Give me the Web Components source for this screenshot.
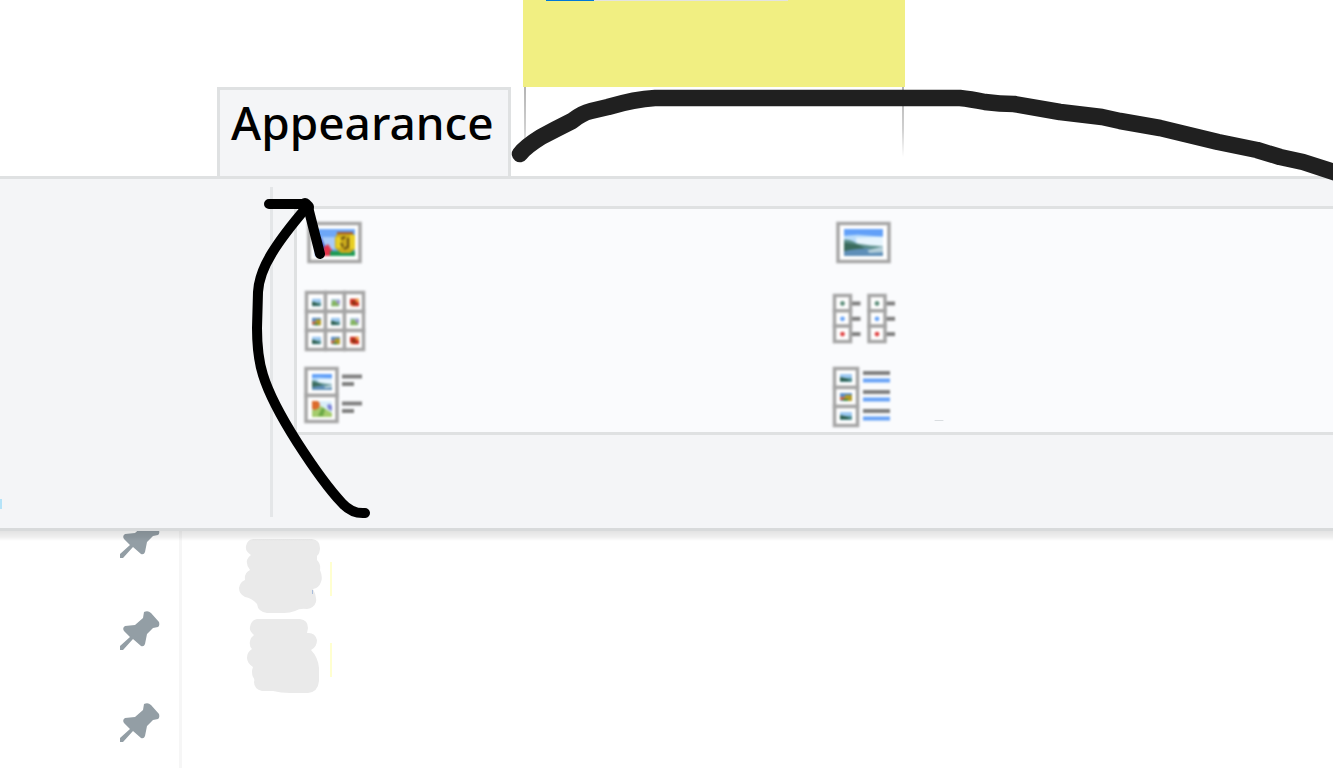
<!DOCTYPE html>
<html lang="en">
<head>
<meta charset="utf-8">
<meta name="viewport" content="width=device-width, initial-scale=1">
<title>Appearance</title>
<style>
  html, body { margin: 0; height: 100%; overflow: hidden; background: #fff; }
  body { font-family: "Noto Sans", sans-serif; color: #000; }
</style>
</head>
<body>
<explorer-window>
  <tab-strip slot="tabs"><ribbon-tab>Appearance</ribbon-tab><sticky-note></sticky-note></tab-strip>
  <ribbon-panel slot="ribbon">
    <layout-gallery>
      <layout-option kind="extra-large"></layout-option>
      <layout-option kind="large"></layout-option>
      <layout-option kind="medium"></layout-option>
      <layout-option kind="list"></layout-option>
      <layout-option kind="tiles"></layout-option>
      <layout-option kind="content"></layout-option>
    </layout-gallery>
  </ribbon-panel>
  <pin-rail slot="rail"><pin-button></pin-button><pin-button></pin-button><pin-button></pin-button></pin-rail>
  <file-pane slot="files"></file-pane>
  <ink-layer slot="ink"></ink-layer>
</explorer-window>

<script>
const define = (name, html, setup) => {
  const template = document.createElement('template');
  template.innerHTML = html;
  customElements.define(name, class extends HTMLElement {
    constructor() {
      super();
      this.attachShadow({ mode: 'open' }).append(template.content.cloneNode(true));
    }
    connectedCallback() { if (setup) setup(this); }
  });
};

define('explorer-window', `
<style>
  :host { display: flex; flex-direction: column; height: 100vh; position: relative; overflow: hidden; }
  .body { flex: 1; display: flex; min-height: 0; overflow: hidden; }
</style>
<slot name="tabs"></slot>
<slot name="ribbon"></slot>
<main class="body"><slot name="rail"></slot><slot name="files"></slot></main>
<slot name="ink"></slot>`);

define('tab-strip', `
<style>
  :host { display: flex; align-items: flex-end; gap: 12px; height: 176px; padding-left: 217px; }
</style>
<slot></slot>`);

define('ribbon-tab', `
<style>
  :host { display: block; }
  button { display: block; height: 89px; padding: 0 14px 22px 11px; margin: 0; box-sizing: border-box;
    border: 3px solid #dfe1e2; border-bottom: 0; background: #f4f5f7; color: #000;
    font: 500 46px/64px "Noto Sans", sans-serif; }
</style>
<button type="button"><slot></slot></button>`);

define('sticky-note', `
<style>
  :host { display: block; width: 382px; height: 176px; }
  .paper { height: 87px; background: #f1ef82; }
  .bar { width: 242px; height: 1px; margin-left: 23px; display: flex; background: #e3e3e0; }
  .bar i { width: 48px; background: #0078d7; }
  .legs { display: flex; justify-content: space-between; padding: 0 1px; }
  .legs i { width: 2px; height: 70px; background: linear-gradient(#b4b4b4, #d0d0d0 60%, #fff); }
</style>
<div class="paper"><div class="bar"><i></i></div></div>
<div class="legs"><i></i><i></i></div>`);

define('ribbon-panel', `
<style>
  :host { display: flex; height: 349px; border-top: 3px solid #dfe1e2; border-bottom: 3px solid #d8dadb;
    background: #f4f5f7; position: relative; z-index: 1; }
  :host::after { content: ""; position: absolute; left: 0; right: 0; top: calc(100% + 3px); height: 10px;
    background: linear-gradient(#0000001c, #00000010 60%, #00000000); }
  .group { width: 270px; box-sizing: border-box; padding-top: 320px; }
  .group i { display: block; width: 2px; height: 10px; background: #b5e3f8; }
  .rule { width: 3px; height: 330px; margin-top: 8px; background: #e4e6e8; }
  .views { flex: 1; min-width: 0; padding: 27px 0 0 21px; }
</style>
<section class="group"><i></i></section>
<div class="rule"></div>
<section class="views"><slot></slot></section>`);

define('layout-gallery', `
<style>
  :host { display: grid; grid-template-columns: repeat(2, 529px); grid-auto-rows: 74px; padding-top: 1px; overflow: hidden;
    border: solid #dfe1e2; border-width: 3px 0 3px 3px; background: #fafbfd; }
</style>
<slot></slot>`);

const landscape = (x, y, w, h) => `<svg x="${x}" y="${y}" width="${w}" height="${h}" viewBox="0 0 40 28" preserveAspectRatio="none">
  <path fill="#62a0f8" d="M0 0h40v28H0z"/><path fill="#b9dcfa" d="M0 7l14-1 26 2v14H0z"/><path fill="#e6f4fd" d="M12 9l28-1v10H14z"/>
  <path fill="#5c8f8c" d="M0 11q8 0 13 4l14 2 13 1v3H0z"/><path fill="#3a6b5c" d="M0 14l14 2 8 4-14 4H0z"/>
  <path fill="#5f8fb8" d="M0 23q18-4 30-2l10 1v6H0z"/><path fill="#b4cfda" d="M24 22l16-4v6l-14 1z"/></svg>`;
const lake = (x, y, w, h) => `<svg x="${x}" y="${y}" width="${w}" height="${h}" viewBox="0 0 8 8" preserveAspectRatio="none">
  <path fill="#9cc8f2" d="M0 0h8v4H0z"/><path fill="#4f8d92" d="M0 4h8v4H0z"/><path fill="#2c5d4c" d="M0 3l3 1 3 2v1H0z"/></svg>`;
const flower = (x, y, w, h) => `<svg x="${x}" y="${y}" width="${w}" height="${h}" viewBox="0 0 20 16" preserveAspectRatio="none">
  <path fill="#d9eefa" d="M0 0h20v16H0z"/><path fill="#a5cc6c" d="M0 9l9-4 6 4 5 3v4H0z"/><path fill="#6aa845" d="M6 15l4-8 3 1-2 7z"/>
  <path fill="#dc6b2c" d="M0 0h6l2 3-1 4-4 2-3-1z"/><path fill="#7d84d8" d="M15 4l3-1 2 2v5l-4-2z"/></svg>`;
const fruit = (x, y, w, h) => `<svg x="${x}" y="${y}" width="${w}" height="${h}" viewBox="0 0 8 8" preserveAspectRatio="none">
  <path fill="#cc3020" d="M0 0h8v8H0z"/><path fill="#f1a04a" d="M5 0h3v4L5 3z"/><path fill="#7b3513" d="M2 3h3v3H2z"/><path fill="#f3e4b8" d="M0 6l4 2H0z"/></svg>`;
const garden = (x, y, w, h) => `<svg x="${x}" y="${y}" width="${w}" height="${h}" viewBox="0 0 12 8" preserveAspectRatio="none">
  <path fill="#5c8fc8" d="M0 0h12v8H0z"/><path fill="#b29a25" d="M5 2h7v6H5z"/><path fill="#d2653c" d="M0 4h5v3H0z"/><path fill="#3f8a48" d="M3 6h5v2H3z"/></svg>`;
const meadow = (x, y, w, h) => `<svg x="${x}" y="${y}" width="${w}" height="${h}" viewBox="0 0 8 8" preserveAspectRatio="none">
  <path fill="#b9d3e8" d="M0 0h8v8H0z"/><path fill="#85b560" d="M1 2h3l3 4v2H0z"/><path fill="#9a8ccb" d="M5 2h3v3H5z"/></svg>`;
const box = (x, y, w, h) => `<rect x="${x}" y="${y}" width="${w}" height="${h}" fill="#fff" stroke="#a6a6a6" stroke-width="3.500"/>`;
const line = (x, y, w, c) => `<path d="M${x} ${y}h${w}" stroke="${c || '#808080'}" stroke-width="4"/>`;

const mediumPictures = [lake, meadow, fruit, garden, lake, meadow, lake, garden, fruit];
const art = {
  'extra-large': ['Extra large icons', box(7, 13.5, 51, 38) + `
    <path fill="#6da7f7" d="M13 19h40v27H13z"/><path fill="#a8cbf8" d="M14 27h20v12H14z"/>
    <path fill="#3b52c4" d="M14 30l5-3 5 12-6 6h-4z"/><path fill="#e5344a" d="M20 46l2-9 4-3 5 8v4z"/>
    <path fill="#1e9a55" d="M28 41h25v5H28z"/><path fill="#a0522d" d="M35 22h16v4H35z"/>
    <path fill="#c9a91c" d="M35 24h16l2 4v11l-5 4h-9l-6-5V28z"/><path fill="#e8cf25" d="M34 27h5v11h-5zM48 25h5v14h-5z"/>
    <path d="M39 29l4-2M41 37l-2-4M46 28v9l-4 2" fill="none" stroke="#6d5213" stroke-width="2"/>`],
  'large': ['Large icons', box(7, 13.5, 51, 38) + landscape(13, 19, 39, 27)],
  'medium': ['Medium icons', mediumPictures.map((draw, i) => {
    const x = 4.5 + (i % 3) * 19, y = 8.5 + Math.floor(i / 3) * 19;
    return box(x, y, 19, 19) + draw(x + 5.5, y + 6, 9, 8);
  }).join('')],
  'list': ['List', [3.5, 38].map(x => ['#5f8f7c', '#69a4f8', '#e04343'].map((c, i) =>
    line(x + 17, 19.5 + i * 15.3, 9) + box(x, 11.5 + i * 15.3, 16, 15.5) +
    `<circle cx="${x + 8}" cy="${19.5 + i * 15.3}" r="2.400" fill="${c}"/>`).join('')).join('')],
  'tiles': ['Tiles', box(4, 10.5, 31, 27) + box(4, 37.5, 31, 26) + landscape(10, 16, 20, 16) + flower(10, 43, 20, 16) +
    line(40, 18.5, 20) + line(40, 26, 12) + line(40, 45.5, 20) + line(40, 53, 12)],
  'content': ['Content', [0, 1, 2].map(i => box(3.5, 10.5 + i * 19, 23, 19) + (i === 1 ? garden : lake)(9, 16 + i * 19, 12, 8) +
    line(32, 15 + i * 19, 27) + line(32, 22.5 + i * 19, 27, '#67a2f7')).join('')]
};

define('layout-option', `
<style>
  :host { display: block; }
  button { display: flex; width: 100%; height: 74px; padding: 0 0 0 5px; border: 0; background: none; }
  svg { display: block; }
  button > svg { filter: blur(0.8px); }
</style>
<button type="button"></button>`, host => {
  const [label, drawing] = art[host.getAttribute('kind')];
  const button = host.shadowRoot.querySelector('button');
  button.setAttribute('aria-label', label);
  button.innerHTML = `<svg width="70" height="74" viewBox="0 0 70 74" aria-hidden="true">${drawing}</svg>`;
});

define('pin-rail', `
<style>
  :host { display: flex; flex-direction: column; align-items: flex-end; width: 182px; box-sizing: border-box;
    margin-top: -38px; padding-right: 19px; border-right: 3px solid #f6f6f6; }
</style>
<slot></slot>`);

define('pin-button', `
<style>
  :host { display: block; flex: none; }
  button { display: flex; align-items: center; height: 92px; padding: 0; border: 0; background: none; }
  svg { display: block; filter: blur(0.7px); }
</style>
<button type="button" aria-label="Pin"><svg width="40" height="40" viewBox="0 0 40 40" aria-hidden="true">
  <path fill="#939ea5" d="M24 1Q28-1 31 2L39 11Q40 15 38 16L33 17 27 23 25 33Q24 36 21 35L13 28 3 39 0 39V35L10 26 4 20Q2 17 5 15L15 14 23 7Z"/></svg></button>`);

define('file-pane', `
<style>
  :host { display: block; flex: 1; min-width: 0; padding: 5px 0 0 54px; }
  svg { display: block; }
</style>
<svg width="100" height="162" viewBox="236 536 100 162" aria-hidden="true">
  <path fill="#eaeaea" d="M253 539H312Q320 540 320 548 320 553 317 556L317 560Q321 564 320 570 323 577 321 582 319 588 313 589 317 596 316 602 314 608 307 609 300 608 295 611 290 613 284 613H267Q258 612 257 604 252 598 245 597 239 594 239 588 240 582 245 580 244 573 250 570 246 565 247 560 248 557 251 555 245 551 246 546 247 540 253 539Z"/>
  <path fill="#eaeaea" d="M257 619H300Q308 620 308 628L307 633Q315 632 317 640 317 647 311 650 318 657 319 668V681Q318 692 308 693H290Q281 693 273 691H262Q254 689 254 682 255 679 253 677 251 672 253 667 247 663 247 658 247 652 252 649 249 646 250 641 251 637 254 635 249 631 250 627 251 620 257 619Z"/>
  <path stroke="#ffffd0" stroke-width="2" d="M331 562v34M331 643v34"/>
  <path stroke="#a9bddc" stroke-width="1" d="M312.500 590v4"/>
</svg>`);

define('ink-layer', `
<style>
  :host { position: absolute; inset: 0; pointer-events: none; z-index: 2; }
  svg { display: block; width: 100%; height: 100%; }
</style>
<svg aria-hidden="true" fill="none" stroke-linecap="round" stroke-linejoin="round">
  <path stroke="#202020" stroke-width="16.500" d="M520 154Q525 147 541 137 556 129 572 121 582 113 591 111L608 107Q635 99 655 98H960Q970 99 985 102 1000 104 1014 104L1060 112 1102 117 1120 121 1160 128 1218 142 1257 150 1280 157 1303 162 1340 174"/>
  <g stroke="#000" stroke-width="10">
    <path d="M365 513Q352 514 342 503 324 484 297 442 271 401 263 375 257 356 257 328L258 292Q259 274 272 253 283 235 306 208"/>
    <path d="M269 204H305L308 207 320 254"/>
    <path d="M305 204l3 3" stroke-width="12"/>
  </g>
  <path stroke="#d9dde0" d="M935 420.500h8"/>
</svg>`);
</script>
</body>
</html>
